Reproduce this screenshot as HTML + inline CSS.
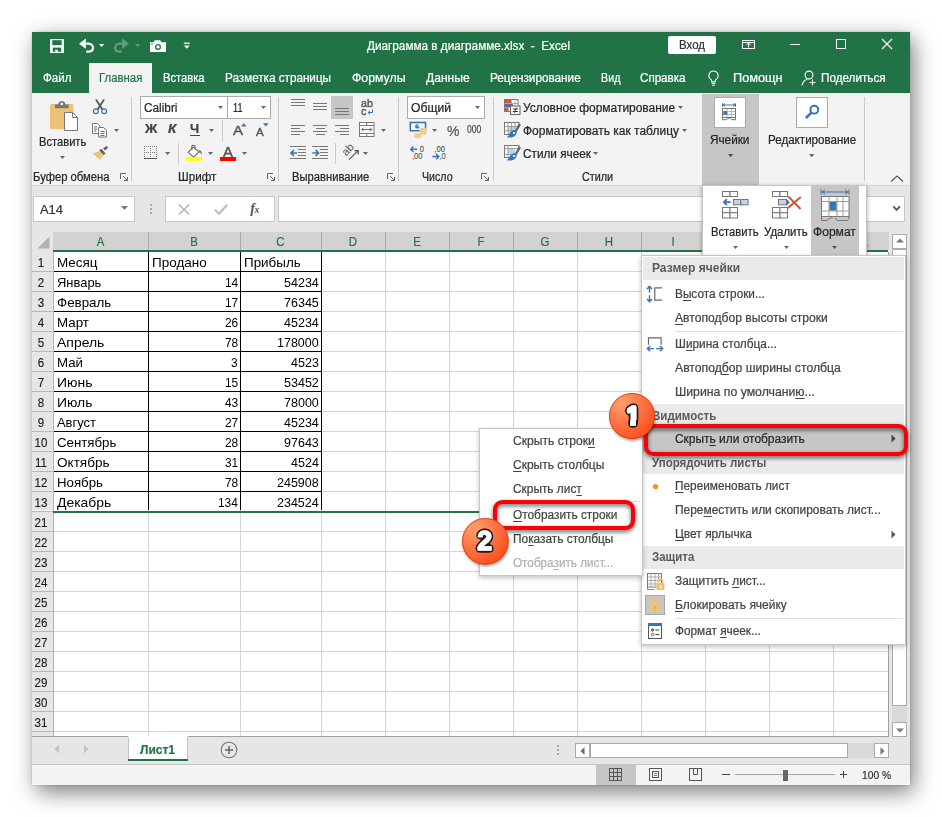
<!DOCTYPE html>
<html lang="ru"><head><meta charset="utf-8"><title>Excel</title><style>
html,body{margin:0;padding:0;background:#fff;}
body{width:942px;height:817px;position:relative;overflow:hidden;font-family:'Liberation Sans', sans-serif;}
.a{position:absolute;display:block;}
.t{white-space:pre;transform-origin:0 50%;-webkit-text-stroke:0.22px;}
u{text-decoration-thickness:1px;text-underline-offset:1.5px;}
</style></head>
<body>
<div class="a" style="left:32px;top:32px;width:878px;height:753px;background:#f3f3f3;box-shadow:3.500px 7px 21px rgba(0,0,0,.52), 0 0 2px rgba(0,0,0,.18);"></div>
<div class="a" style="left:32px;top:32px;width:878px;height:61px;background:#217346;"></div>
<div class="a" style="left:89px;top:63px;width:63px;height:30px;background:#f3f3f3;"></div>
<svg class="a" style="left:50px;top:39px;" width="14" height="14" viewBox="0 0 14 14"><path d="M0 0.800Q0 0 .8 0H13.200Q14 0 14 .8V13.200Q14 14 13.200 14H.8Q0 14 0 13.200z" fill="#fff"/><rect x="2.300" y="1.200" width="9.400" height="5" fill="#217346"/><rect x="2.800" y="8.600" width="8.400" height="4.200" fill="#217346"/><rect x="5.200" y="10.800" width="2.600" height="2" fill="#fff"/></svg>
<svg class="a" style="left:78px;top:38px;" width="17" height="15" viewBox="0 0 17 15"><path d="M1 5.700L7.800 0.600V10.800z" fill="#fff"/><path d="M7 5.700H10.300C13.400 5.700 15 7.800 15 9.800C15 12 13.200 13.700 10.200 13.700H8.300" fill="none" stroke="#fff" stroke-width="2.200"/></svg>
<svg class="a" style="left:98.1px;top:43.1px" width="7.2" height="5.016"><path d="M1 1h5.2l-2.6 3.016z" fill="#fff"/></svg>
<svg class="a" style="left:113px;top:38px;" width="17" height="15" viewBox="0 0 17 15"><g opacity=".3" transform="translate(17,0) scale(-1,1)"><path d="M1 5.700L7.800 0.600V10.800z" fill="#fff"/><path d="M7 5.700H10.300C13.400 5.700 15 7.800 15 9.800C15 12 13.200 13.700 10.200 13.700H8.300" fill="none" stroke="#fff" stroke-width="2.200"/></g></svg>
<svg class="a" style="left:133.9px;top:43.1px" width="7.2" height="5.016"><path d="M1 1h5.2l-2.6 3.016z" fill="rgba(255,255,255,.3)"/></svg>
<svg class="a" style="left:149px;top:39px;" width="18" height="14" viewBox="0 0 18 14"><path d="M1 3.2h3.6l1.2-2h5.4l1.2 2H17v9.8H1z" fill="#fff"/><circle cx="9" cy="7.9" r="3" fill="#217346"/><circle cx="9" cy="7.900" r="1.700" fill="#fff"/><rect x="2.300" y="4.300" width="1.300" height="1.300" fill="#217346"/></svg>
<svg class="a" style="left:183px;top:42px;" width="8" height="8" viewBox="0 0 8 8"><rect x="0.8" y="0.6" width="6" height="1.2" fill="#fff"/><path d="M0.8 3.6h6l-3 3.2z" fill="#fff"/></svg>
<span class="a t" id="T0" style="left:367px;transform:scaleX(0.9788);top:39.64px;font-size:12px;line-height:12px;color:#fff;">Диаграмма в диаграмме.xlsx  -  Excel</span>
<div class="a" style="left:668px;top:35.5px;width:48px;height:18.5px;background:#fff;border-radius:2px;"></div>
<span class="a t" id="T1" style="left:679px;transform:scaleX(0.9574);top:39.34px;font-size:12px;line-height:12px;color:#333;">Вход</span>
<svg class="a" style="left:742px;top:40px;" width="13" height="9" viewBox="0 0 13 9"><rect x="0.5" y="0.5" width="12" height="8" fill="none" stroke="#fff"/><path d="M0.5 2.5h12" stroke="#fff"/><path d="M6.5 7.5v-4M4.5 5l2-2 2 2" fill="none" stroke="#fff"/></svg>
<div class="a" style="left:790px;top:44px;width:10px;height:1px;background:#fff;"></div>
<div class="a" style="left:836px;top:39px;width:10px;height:10px;border:1px solid #fff;box-sizing:border-box;"></div>
<svg class="a" style="left:881px;top:38px;" width="12" height="12" viewBox="0 0 12 12"><path d="M1 1l10 10M11 1L1 11" stroke="#fff" stroke-width="1.1" fill="none"/></svg>
<span class="a t" id="T2" style="left:43px;transform:scaleX(0.9690);top:72.04px;font-size:12px;line-height:12px;color:#fff;">Файл</span>
<span class="a t" id="T3" style="left:98.5px;transform:scaleX(0.9477);top:72.04px;font-size:12px;line-height:12px;color:#217346;">Главная</span>
<span class="a t" id="T4" style="left:163px;transform:scaleX(0.9325);top:72.04px;font-size:12px;line-height:12px;color:#fff;">Вставка</span>
<span class="a t" id="T5" style="left:225px;transform:scaleX(0.9736);top:72.04px;font-size:12px;line-height:12px;color:#fff;">Разметка страницы</span>
<span class="a t" id="T6" style="left:352.4px;transform:scaleX(1.0245);top:72.04px;font-size:12px;line-height:12px;color:#fff;">Формулы</span>
<span class="a t" id="T7" style="left:425.8px;transform:scaleX(1.0079);top:72.04px;font-size:12px;line-height:12px;color:#fff;">Данные</span>
<span class="a t" id="T8" style="left:489.7px;transform:scaleX(0.9787);top:72.04px;font-size:12px;line-height:12px;color:#fff;">Рецензирование</span>
<span class="a t" id="T9" style="left:600.6px;transform:scaleX(0.8932);top:72.04px;font-size:12px;line-height:12px;color:#fff;">Вид</span>
<span class="a t" id="T10" style="left:640.4px;transform:scaleX(0.9665);top:72.04px;font-size:12px;line-height:12px;color:#fff;">Справка</span>
<svg class="a" style="left:707px;top:70px;" width="13" height="17" viewBox="0 0 13 17"><path d="M6.5 1a4.6 4.6 0 0 0-2.6 8.4c.5.4.8 1 .8 1.7v.6h3.6v-.6c0-.7.3-1.3.8-1.7A4.6 4.6 0 0 0 6.5 1z" fill="none" stroke="#fff" stroke-width="1.1"/><path d="M4.7 13.4h3.6M5.2 15.2h2.6" stroke="#fff" stroke-width="1.1"/></svg>
<span class="a t" id="T11" style="left:733px;transform:scaleX(1.0592);top:72.04px;font-size:12px;line-height:12px;color:#fff;">Помощн</span>
<svg class="a" style="left:801px;top:70px;" width="17" height="17" viewBox="0 0 17 17"><circle cx="8" cy="5" r="3.9" fill="none" stroke="#fff" stroke-width="1.1"/><path d="M1 15.5c0.6-3.6 2.6-5.6 5.2-6.3" fill="none" stroke="#fff" stroke-width="1.1"/><path d="M11.5 9.5v6M8.5 12.5h6" stroke="#fff" stroke-width="1.1"/></svg>
<span class="a t" id="T12" style="left:821px;transform:scaleX(0.9749);top:72.04px;font-size:12px;line-height:12px;color:#fff;">Поделиться</span>
<div class="a" style="left:32px;top:185px;width:878px;height:1px;background:#d6d6d6;"></div>
<svg class="a" style="left:49px;top:100px;" width="30" height="32" viewBox="0 0 30 32">
<rect x="1" y="4" width="23.5" height="25" rx="1.5" fill="#eec274"/>
<path d="M6 8.300V4.600h3.300C9.300 2.300 10.600 1 12.800 1s3.500 1.300 3.500 3.600H19.600V8.300z" fill="#777"/>
<circle cx="12.800" cy="3.900" r="1.300" fill="#f3f3f3"/>
<path d="M15.5 12.5h8l5 5v13h-13z" fill="#fff" stroke="#777" stroke-width="1"/>
<path d="M23.5 12.5v5h5" fill="none" stroke="#777" stroke-width="1"/></svg>
<span class="a t" id="T13" style="left:38.5px;transform:scaleX(0.9297);top:135.64px;font-size:12px;line-height:12px;color:#262626;">Вставить</span>
<svg class="a" style="left:59.0px;top:155.1px" width="7" height="4.9"><path d="M1 1h5l-2.5 2.9z" fill="#666"/></svg>
<svg class="a" style="left:92px;top:99px;" width="16" height="16" viewBox="0 0 16 16">
<path d="M4 0.500l6.400 10M12 0.500L5.600 10.500" stroke="#5e5e5e" stroke-width="1.900" fill="none"/>
<circle cx="3.9" cy="12.2" r="2.4" fill="none" stroke="#3a73b5" stroke-width="1.2"/>
<circle cx="12.1" cy="12.2" r="2.4" fill="none" stroke="#3a73b5" stroke-width="1.2"/></svg>
<svg class="a" style="left:92px;top:123px;" width="16" height="15" viewBox="0 0 16 15">
<path d="M0.5 0.5h5l2.5 2.5v7.5h-7.5z" fill="#fff" stroke="#777"/>
<path d="M2 4h3M2 6h3M2 8h2" stroke="#3a73b5" stroke-width="1"/>
<path d="M6.5 4.5h5l3 3v6.5h-8z" fill="#fff" stroke="#777"/>
<path d="M8.5 8.5h4M8.5 10.5h4M8.5 12.5h4" stroke="#3a73b5" stroke-width="1"/></svg>
<svg class="a" style="left:113.0px;top:128.1px" width="7" height="4.9"><path d="M1 1h5l-2.5 2.9z" fill="#666"/></svg>
<svg class="a" style="left:92px;top:145px;" width="17" height="16" viewBox="0 0 17 16">
<path d="M11.2 3.6l3.2-2.8 1.8 2-3.2 2.8z" fill="#666"/>
<path d="M7.2 5.6l2.2-1.9 4.2 4.7-2.2 1.9z" fill="#666"/>
<path d="M6.6 6.6L0.5 8.4 8.2 15l3-6z" fill="#eec274"/></svg>
<span class="a t" id="T14" style="left:33px;transform:scaleX(0.9381);top:170.74px;font-size:12px;line-height:12px;color:#262626;">Буфер обмена</span>
<svg class="a" style="left:120px;top:173px;" width="8" height="8" viewBox="0 0 8 8"><path d="M0.5 6V0.5H6M3 3l4.5 4.5M7.5 4v3.5H4" fill="none" stroke="#666" stroke-width="1"/></svg>
<div class="a" style="left:131px;top:97px;width:1px;height:84px;background:#c8c8c8;"></div>
<div class="a" style="left:140px;top:96px;width:88px;height:23px;background:#fff;border:1px solid #ababab;box-sizing:border-box;"></div>
<div class="a" style="left:227px;top:96px;width:44px;height:23px;background:#fff;border:1px solid #ababab;box-sizing:border-box;"></div>
<span class="a t" id="T15" style="left:143.5px;transform:scaleX(0.9848);top:101.54px;font-size:12px;line-height:12px;color:#262626;">Calibri</span>
<svg class="a" style="left:216.9px;top:105.0px" width="7" height="4.9"><path d="M1 1h5l-2.5 2.9z" fill="#666"/></svg>
<span class="a t" id="T16" style="left:232.5px;transform:scaleX(0.7619);top:101.54px;font-size:12px;line-height:12px;color:#262626;">11</span>
<svg class="a" style="left:259.9px;top:105.0px" width="7" height="4.9"><path d="M1 1h5l-2.5 2.9z" fill="#666"/></svg>
<span class="a t" id="T17" style="left:144.7px;transform:scaleX(1.0873);top:123.22px;font-size:12.5px;line-height:12.5px;color:#444;font-weight:700;">Ж</span>
<span class="a t" id="T18" style="left:167.8px;transform:scaleX(1.0927);top:123.22px;font-size:12.5px;line-height:12.5px;color:#444;font-weight:700;font-style:italic;">К</span>
<span class="a t" id="T19" style="left:190.4px;transform:scaleX(1.0458);top:123.22px;font-size:12.5px;line-height:12.5px;color:#444;font-weight:700;">Ч</span>
<div class="a" style="left:190.2px;top:135.2px;width:9.8px;height:1px;background:#444;"></div>
<svg class="a" style="left:208.0px;top:128.1px" width="7" height="4.9"><path d="M1 1h5l-2.5 2.9z" fill="#666"/></svg>
<div class="a" style="left:222px;top:120px;width:1px;height:21px;background:#c8c8c8;"></div>
<span class="a t" id="T20" style="left:233px;transform:scaleX(1.1092);top:124.27px;font-size:13.5px;line-height:13.5px;color:#555;-webkit-text-stroke:.45px;">A</span>
<svg class="a" style="left:240.5px;top:122.5px;" width="6" height="4" viewBox="0 0 6 4"><path d="M0 3.6L2.8 0.3 5.6 3.6z" fill="#3a73b5"/></svg>
<span class="a t" id="T21" style="left:256px;transform:scaleX(1.0976);top:126.81px;font-size:10.5px;line-height:10.5px;color:#555;-webkit-text-stroke:.4px;">A</span>
<svg class="a" style="left:262.5px;top:122.5px;" width="6" height="4" viewBox="0 0 6 4"><path d="M0 0.3h5.6L2.8 3.6z" fill="#3a73b5"/></svg>
<svg class="a" style="left:143px;top:145px;" width="15" height="15" viewBox="0 0 15 15">
<g stroke="#7a7a7a" stroke-width="1" stroke-dasharray="1 1" fill="none" shape-rendering="crispEdges">
<path d="M1 1.500h13M1 7.500h13M1.500 1v12M7.500 1v12M13.500 1v12"/></g>
<path d="M1 13.500h13" stroke="#555" stroke-width="1.200" shape-rendering="crispEdges"/></svg>
<svg class="a" style="left:163.9px;top:150.8px" width="7.2" height="5.016"><path d="M1 1h5.2l-2.6 3.016z" fill="#666"/></svg>
<div class="a" style="left:178px;top:143px;width:1px;height:21px;background:#c8c8c8;"></div>
<svg class="a" style="left:186px;top:144px;" width="17" height="17" viewBox="0 0 17 17">
<path d="M7.300 3.200L2.300 8.300l5.300 4.900 5.400-5.300z" fill="#fff" stroke="#666" stroke-width="1.100"/>
<path d="M5.800 6V2.600c0-1.900 3.200-1.900 3.200 0v2.200" fill="none" stroke="#666" stroke-width="1.100"/>
<path d="M12.600 5.800c2.200.4 3.600 2.200 3.300 5.200-.7-1.700-1.600-2.500-3.100-2.700l1-1z" fill="#3a73b5"/>
<rect x="0" y="13" width="16.200" height="3.800" fill="#ffff00"/></svg>
<svg class="a" style="left:206.8px;top:150.9px" width="7" height="4.9"><path d="M1 1h5l-2.5 2.9z" fill="#666"/></svg>
<span class="a t" id="T22" style="left:223.4px;transform:scaleX(1.0595);top:144.95px;font-size:14px;line-height:14px;color:#555;-webkit-text-stroke:.45px;">A</span>
<div class="a" style="left:220px;top:157px;width:16.2px;height:3.8px;background:#ff0000;"></div>
<svg class="a" style="left:241.0px;top:150.9px" width="7" height="4.9"><path d="M1 1h5l-2.5 2.9z" fill="#666"/></svg>
<span class="a t" id="T23" style="left:177.6px;transform:scaleX(0.9700);top:170.74px;font-size:12px;line-height:12px;color:#262626;">Шрифт</span>
<svg class="a" style="left:267px;top:173px;" width="8" height="8" viewBox="0 0 8 8"><path d="M0.5 6V0.5H6M3 3l4.5 4.5M7.5 4v3.5H4" fill="none" stroke="#666" stroke-width="1"/></svg>
<div class="a" style="left:278px;top:97px;width:1px;height:84px;background:#c8c8c8;"></div>
<div class="a" style="left:291px;top:99px;width:14px;height:1px;background:#777;"></div>
<div class="a" style="left:291px;top:102px;width:14px;height:1px;background:#777;"></div>
<div class="a" style="left:291px;top:105px;width:14px;height:1px;background:#777;"></div>
<div class="a" style="left:313px;top:103px;width:14px;height:1px;background:#777;"></div>
<div class="a" style="left:313px;top:106px;width:14px;height:1px;background:#777;"></div>
<div class="a" style="left:313px;top:109px;width:14px;height:1px;background:#777;"></div>
<div class="a" style="left:331px;top:96px;width:22px;height:23px;background:#c6c6c6;"></div>
<div class="a" style="left:335px;top:108px;width:14px;height:1px;background:#777;"></div>
<div class="a" style="left:335px;top:111px;width:14px;height:1px;background:#777;"></div>
<div class="a" style="left:335px;top:114px;width:14px;height:1px;background:#777;"></div>
<span class="a t" id="T24" style="left:360.8px;transform:scaleX(1.0096);top:98.41px;font-size:10.5px;line-height:10.5px;color:#555;-webkit-text-stroke:.4px;">ab</span>
<span class="a t" id="T25" style="left:361px;top:105.71px;font-size:10.5px;line-height:10.5px;color:#555;-webkit-text-stroke:.4px;">c</span>
<svg class="a" style="left:366.5px;top:108.5px;" width="7" height="6" viewBox="0 0 7 6"><path d="M5.5 0.5v3H1.2M3 1.6L1 3.5l2 1.9" fill="none" stroke="#3a73b5" stroke-width="1"/></svg>
<div class="a" style="left:291px;top:125px;width:14px;height:1px;background:#777;"></div>
<div class="a" style="left:291px;top:128px;width:9px;height:1px;background:#777;"></div>
<div class="a" style="left:291px;top:131px;width:14px;height:1px;background:#777;"></div>
<div class="a" style="left:291px;top:134px;width:9px;height:1px;background:#777;"></div>
<div class="a" style="left:313px;top:125px;width:14px;height:1px;background:#777;"></div>
<div class="a" style="left:315.5px;top:128px;width:9.0px;height:1px;background:#777;"></div>
<div class="a" style="left:313px;top:131px;width:14px;height:1px;background:#777;"></div>
<div class="a" style="left:315.5px;top:134px;width:9.0px;height:1px;background:#777;"></div>
<div class="a" style="left:335px;top:125px;width:14px;height:1px;background:#777;"></div>
<div class="a" style="left:340px;top:128px;width:9px;height:1px;background:#777;"></div>
<div class="a" style="left:335px;top:131px;width:14px;height:1px;background:#777;"></div>
<div class="a" style="left:340px;top:134px;width:9px;height:1px;background:#777;"></div>
<svg class="a" style="left:359px;top:122px;" width="16" height="15" viewBox="0 0 16 15">
<rect x="0.5" y="0.5" width="14.5" height="14" fill="#fff" stroke="#777"/>
<path d="M0.5 3.5h14.5M0.5 11.5h14.5M7.7 0.5v3M7.7 11.5v3" stroke="#777"/>
<path d="M2.8 7.5h10M4.6 5.7L2.8 7.5l1.8 1.8M11 5.7l1.8 1.8L11 9.3" fill="none" stroke="#3a73b5" stroke-width="1"/></svg>
<svg class="a" style="left:380.0px;top:128.1px" width="7" height="4.9"><path d="M1 1h5l-2.5 2.9z" fill="#666"/></svg>
<div class="a" style="left:290px;top:146px;width:16px;height:1px;background:#777;"></div>
<div class="a" style="left:298px;top:149px;width:8px;height:1px;background:#777;"></div>
<div class="a" style="left:298px;top:152px;width:8px;height:1px;background:#777;"></div>
<div class="a" style="left:298px;top:155px;width:8px;height:1px;background:#777;"></div>
<div class="a" style="left:290px;top:158px;width:16px;height:1px;background:#777;"></div>
<svg class="a" style="left:290px;top:148.5px;" width="8" height="8" viewBox="0 0 8 8"><path d="M7 4H1M4 1L1 4l3 3" fill="none" stroke="#3a73b5" stroke-width="1.7"/></svg>
<div class="a" style="left:312px;top:146px;width:16px;height:1px;background:#777;"></div>
<div class="a" style="left:320px;top:149px;width:8px;height:1px;background:#777;"></div>
<div class="a" style="left:320px;top:152px;width:8px;height:1px;background:#777;"></div>
<div class="a" style="left:320px;top:155px;width:8px;height:1px;background:#777;"></div>
<div class="a" style="left:312px;top:158px;width:16px;height:1px;background:#777;"></div>
<svg class="a" style="left:312px;top:148.5px;" width="8" height="8" viewBox="0 0 8 8"><path d="M0.3 4h6M3.6 1l3 3-3 3" fill="none" stroke="#3a73b5" stroke-width="1.7"/></svg>
<div class="a" style="left:335px;top:143px;width:1px;height:21px;background:#c8c8c8;"></div>
<svg class="a" style="left:340px;top:142px;" width="22" height="22" viewBox="0 0 22 22">
<text x="0" y="0" font-family="Liberation Sans, sans-serif" font-size="11" fill="#555" transform="translate(6.300,14.600) rotate(-48)">ab</text>
<path d="M9 17.600L18 8.900M14.400 8.600h3.800v3.800" fill="none" stroke="#555" stroke-width="1.200"/></svg>
<svg class="a" style="left:362.0px;top:150.9px" width="7" height="4.9"><path d="M1 1h5l-2.5 2.9z" fill="#666"/></svg>
<span class="a t" id="T26" style="left:291.7px;transform:scaleX(0.9357);top:170.74px;font-size:12px;line-height:12px;color:#262626;">Выравнивание</span>
<svg class="a" style="left:387px;top:173px;" width="8" height="8" viewBox="0 0 8 8"><path d="M0.5 6V0.5H6M3 3l4.5 4.5M7.5 4v3.5H4" fill="none" stroke="#666" stroke-width="1"/></svg>
<div class="a" style="left:398px;top:97px;width:1px;height:84px;background:#c8c8c8;"></div>
<div class="a" style="left:407px;top:96px;width:78px;height:23px;background:#fff;border:1px solid #ababab;box-sizing:border-box;"></div>
<span class="a t" id="T27" style="left:410.8px;transform:scaleX(1.0177);top:101.54px;font-size:12px;line-height:12px;color:#262626;">Общий</span>
<svg class="a" style="left:474.4px;top:105.0px" width="7" height="4.9"><path d="M1 1h5l-2.5 2.9z" fill="#666"/></svg>
<svg class="a" style="left:409px;top:121px;" width="18" height="18" viewBox="0 0 18 18">
<rect x="1.300" y="1.500" width="15.200" height="8.200" fill="#fff" stroke="#3a73b5" stroke-width="1.600"/>
<circle cx="8.300" cy="5.400" r="2.200" fill="#3a73b5"/><circle cx="9" cy="4.900" r=".8" fill="#fff"/>
<g fill="#eec274" stroke="#f6dfae" stroke-width=".7">
<ellipse cx="13.900" cy="12.300" rx="3.500" ry="1.500"/><ellipse cx="13.900" cy="10.300" rx="3.500" ry="1.500"/><ellipse cx="13.900" cy="8.300" rx="3.500" ry="1.500"/>
<ellipse cx="8.600" cy="15.600" rx="3.500" ry="1.500"/><ellipse cx="8.600" cy="13.700" rx="3.500" ry="1.500"/></g></svg>
<svg class="a" style="left:431.2px;top:128.0px" width="7.2" height="5.016"><path d="M1 1h5.2l-2.6 3.016z" fill="#666"/></svg>
<span class="a t" id="T28" style="left:446.5px;transform:scaleX(0.9368);top:123.40px;font-size:15px;line-height:15px;color:#555;">%</span>
<span class="a t" id="T29" style="left:466.7px;transform:scaleX(0.8157);top:124.01px;font-size:10.5px;line-height:10.5px;color:#444;">000</span>
<svg class="a" style="left:410px;top:145px;" width="16" height="15" viewBox="0 0 16 15">
<path d="M7 4.300H0.800M3.400 1.600L0.600 4.300 3.400 7" fill="none" stroke="#3a73b5" stroke-width="1.400"/>
<text transform="translate(9.800,6.700) scale(.82,1)" font-family="Liberation Sans, sans-serif" font-size="9.300" fill="#3a3a3a">0</text>
<text transform="translate(2,14) scale(.82,1)" font-family="Liberation Sans, sans-serif" font-size="9.300" fill="#3a3a3a">,00</text></svg>
<svg class="a" style="left:432px;top:145px;" width="16" height="15" viewBox="0 0 16 15">
<text transform="translate(2.300,6.700) scale(.82,1)" font-family="Liberation Sans, sans-serif" font-size="9.300" fill="#3a3a3a">,00</text>
<path d="M0.300 11.500H6.600M4 8.800L6.800 11.500 4 14.200" fill="none" stroke="#3a73b5" stroke-width="1.400"/>
<text transform="translate(7.300,14) scale(.82,1)" font-family="Liberation Sans, sans-serif" font-size="9.300" fill="#3a3a3a">,0</text></svg>
<span class="a t" id="T30" style="left:421.7px;transform:scaleX(0.8866);top:170.74px;font-size:12px;line-height:12px;color:#262626;">Число</span>
<svg class="a" style="left:481px;top:173px;" width="8" height="8" viewBox="0 0 8 8"><path d="M0.5 6V0.5H6M3 3l4.5 4.5M7.5 4v3.5H4" fill="none" stroke="#666" stroke-width="1"/></svg>
<div class="a" style="left:492.5px;top:97px;width:1px;height:84px;background:#c8c8c8;"></div>
<svg class="a" style="left:503px;top:98px;" width="18" height="18" viewBox="0 0 18 18">
<rect x="1.500" y="1.500" width="13.500" height="12" fill="#fff" stroke="#777"/>
<path d="M8.500 1.500v12M1.500 5.500h13.500M1.500 9.500h13.500M12 1.500v8" stroke="#999" stroke-width=".8"/>
<rect x="2" y="2" width="6" height="3" fill="#e0532f"/><rect x="2" y="6" width="8" height="3" fill="#3a73b5"/><rect x="2" y="10" width="3.500" height="3" fill="#e0532f"/>
<rect x="7.500" y="8" width="9.500" height="8.500" fill="#fff" stroke="#6a6a6a" stroke-width="1.100"/>
<path d="M9.800 11h5M9.800 13.500h5M13.600 9.600l-2.500 5.300" stroke="#333" stroke-width="1"/></svg>
<svg class="a" style="left:503px;top:121px;" width="18" height="18" viewBox="0 0 18 18">
<rect x="1.500" y="1.500" width="14.500" height="12" fill="#fff" stroke="#777"/>
<rect x="5" y="5.500" width="7" height="7.500" fill="#bcd4ee"/><path d="M5 1.500v12M8.500 1.500v12M12 1.500v12M1.500 5.500h14.500M1.500 9.500h14.500" stroke="#999" stroke-width=".9"/>
<path d="M9.500 14.500L16.300 3.500l1.200 0v11z" fill="#f3f3f3"/>
<path d="M11.800 9.600L15.800 2.200l2.200 1.600-4.300 7.200z" fill="#6a6a6a"/>
<path d="M12 9.400c-2.400-.3-4.400 1.200-5.400 3.400-.6 1.300-1.400 2.500-2.600 3.400 3.400.7 6.400.2 8.300-1.800 1.200-1.300 1.600-2.900 1.300-4z" fill="#3a73b5"/>
<ellipse cx="11" cy="12" rx="1.300" ry=".9" fill="#fff" transform="rotate(-35 11 12)"/></svg>
<svg class="a" style="left:503px;top:144px;" width="18" height="18" viewBox="0 0 18 18">
<rect x="1.500" y="1.500" width="14.500" height="12" fill="#fff" stroke="#777"/>
<rect x="5" y="4.500" width="7" height="6" fill="#bcd4ee"/><path d="M5 1.500v12M1.500 4.500h14.500M1.500 10.500h11" stroke="#999" stroke-width=".9"/>
<path d="M9.500 14.500L16.300 3.500l1.200 0v11z" fill="#f3f3f3"/>
<path d="M11.800 9.600L15.800 2.200l2.200 1.600-4.300 7.200z" fill="#6a6a6a"/>
<path d="M12 9.400c-2.400-.3-4.400 1.200-5.400 3.400-.6 1.300-1.400 2.500-2.600 3.400 3.400.7 6.400.2 8.300-1.800 1.200-1.300 1.600-2.900 1.300-4z" fill="#3a73b5"/>
<ellipse cx="11" cy="12" rx="1.300" ry=".9" fill="#fff" transform="rotate(-35 11 12)"/></svg>
<span class="a t" id="T31" style="left:523px;transform:scaleX(0.9969);top:101.64px;font-size:12px;line-height:12px;color:#262626;">Условное форматирование</span>
<svg class="a" style="left:677.3px;top:105.0px" width="7" height="4.9"><path d="M1 1h5l-2.5 2.9z" fill="#666"/></svg>
<span class="a t" id="T32" style="left:523px;transform:scaleX(0.9991);top:124.64px;font-size:12px;line-height:12px;color:#262626;">Форматировать как таблицу</span>
<svg class="a" style="left:680.8px;top:128.1px" width="7" height="4.9"><path d="M1 1h5l-2.5 2.9z" fill="#666"/></svg>
<span class="a t" id="T33" style="left:523px;transform:scaleX(0.9817);top:147.54px;font-size:12px;line-height:12px;color:#262626;">Стили ячеек</span>
<svg class="a" style="left:592.3px;top:150.9px" width="7" height="4.9"><path d="M1 1h5l-2.5 2.9z" fill="#666"/></svg>
<span class="a t" id="T34" style="left:581.7px;transform:scaleX(0.8994);top:170.74px;font-size:12px;line-height:12px;color:#262626;">Стили</span>
<div class="a" style="left:702px;top:94px;width:57px;height:91px;background:#c6c6c6;"></div>
<div class="a" style="left:714px;top:97px;width:32px;height:31px;background:#fff;border:1px solid #ababab;box-sizing:border-box;"></div>
<svg class="a" style="left:721px;top:103px;" width="17" height="18" viewBox="0 0 17 18">
<path d="M1.500 0.300v3.400M14.500 0.300v3.400M2 2h12M4 0.500L2 2l2 1.500M12 0.500L14 2l-2 1.500" fill="none" stroke="#3a73b5" stroke-width="1"/>
<rect x="1.500" y="5.500" width="13" height="9" fill="#fff" stroke="#777"/>
<path d="M2 8.500h12M2 11.500h12M6 6v8M10.500 6v8" stroke="#b9b9b9" stroke-width="1"/>
<rect x="2.300" y="8.200" width="4" height="3.500" fill="#3a73b5"/>
<path d="M1.500 14.500v2.200h4.300l1-1.300h1.700M9.300 15.400l1 1.300h4.200v-2.200" fill="none" stroke="#777" stroke-width="1"/></svg>
<span class="a t" id="T35" style="left:710px;transform:scaleX(0.9789);top:134.04px;font-size:12px;line-height:12px;color:#262626;">Ячейки</span>
<svg class="a" style="left:726.7px;top:152.8px" width="7.4" height="5.132"><path d="M1 1h5.4l-2.7 3.132z" fill="#555"/></svg>
<div class="a" style="left:796px;top:97px;width:32px;height:31px;background:#fff;border:1px solid #ababab;box-sizing:border-box;"></div>
<svg class="a" style="left:804px;top:104px;" width="16" height="16" viewBox="0 0 16 16"><circle cx="10.300" cy="5.700" r="3.900" fill="none" stroke="#3a73b5" stroke-width="2"/><path d="M7.500 8.600L1.800 14" stroke="#3a73b5" stroke-width="2.500"/></svg>
<span class="a t" id="T36" style="left:767.6px;transform:scaleX(0.9659);top:134.04px;font-size:12px;line-height:12px;color:#262626;">Редактирование</span>
<svg class="a" style="left:807.7px;top:152.8px" width="7.4" height="5.132"><path d="M1 1h5.4l-2.7 3.132z" fill="#666"/></svg>
<div class="a" style="left:864px;top:97px;width:1px;height:84px;background:#c8c8c8;"></div>
<svg class="a" style="left:890px;top:175px;" width="14" height="8" viewBox="0 0 14 8"><path d="M1 6.500l6-5.500 6 5.500" fill="none" stroke="#555" stroke-width="1.100"/></svg>
<div class="a" style="left:32px;top:186px;width:878px;height:46px;background:#e6e6e6;"></div>
<div class="a" style="left:33px;top:196px;width:102px;height:26px;background:#fff;border:1px solid #c8c8c8;box-sizing:border-box;"></div>
<span class="a t" id="T37" style="left:40px;transform:scaleX(1.0768);top:203.64px;font-size:12px;line-height:12px;color:#333;">A14</span>
<svg class="a" style="left:120.0px;top:205.0px" width="9" height="6.06"><path d="M1 1h7l-3.5 4.06z" fill="#777"/></svg>
<div class="a" style="left:149.5px;top:203.8px;width:2px;height:2px;background:#a8a8a8;"></div>
<div class="a" style="left:149.5px;top:207.8px;width:2px;height:2px;background:#a8a8a8;"></div>
<div class="a" style="left:149.5px;top:211.8px;width:2px;height:2px;background:#a8a8a8;"></div>
<div class="a" style="left:165px;top:196px;width:110px;height:26px;background:#fff;border:1px solid #c8c8c8;box-sizing:border-box;"></div>
<svg class="a" style="left:178px;top:203.5px;" width="12" height="11" viewBox="0 0 12 11"><path d="M0.800 0.500l10.400 10M11.200 0.500L0.800 10.500" stroke="#b4b4b4" stroke-width="1.500" fill="none"/></svg>
<svg class="a" style="left:214px;top:203.5px;" width="14" height="11" viewBox="0 0 14 11"><path d="M0.800 5.800l4.200 4L13.200 0.800" stroke="#bcbcbc" stroke-width="2.100" fill="none"/></svg>
<span class="a" style="left:250.300px;top:201px;font:italic 700 14px 'Liberation Serif',serif;color:#555;line-height:15px;letter-spacing:-0.500px"><i>f</i><span style="font-size:9.500px">x</span></span>
<div class="a" style="left:278px;top:196px;width:627px;height:26px;background:#fff;border:1px solid #c8c8c8;box-sizing:border-box;"></div>
<svg class="a" style="left:892px;top:205px;" width="10" height="8" viewBox="0 0 10 8"><path d="M1.300 1.300l3.300 3.500 3.300-3.500" fill="none" stroke="#555" stroke-width="1.900"/></svg>
<div class="a" style="left:32px;top:232px;width:857px;height:505px;background:#fff;"></div>
<div class="a" style="left:53px;top:232px;width:836px;height:18px;background:#d2d2d2;"></div>
<div class="a" style="left:53px;top:250px;width:835px;height:2px;background:#217346;"></div>
<div class="a" style="left:32px;top:232px;width:21px;height:20px;background:#e6e6e6;"></div>
<svg class="a" style="left:37.4px;top:235.5px;" width="13" height="13" viewBox="0 0 13 13"><path d="M12.500 0.500v12H0.500z" fill="#b2b2b2"/></svg>
<span class="a" style="left:53px;top:233.500px;width:95px;text-align:center;font-size:13px;line-height:16px;color:#217346;transform:scaleX(.88);-webkit-text-stroke:.2px">A</span>
<div class="a" style="left:148px;top:232px;width:1px;height:18px;background:#ababab;"></div>
<span class="a" style="left:148px;top:233.500px;width:92px;text-align:center;font-size:13px;line-height:16px;color:#217346;transform:scaleX(.88);-webkit-text-stroke:.2px">B</span>
<div class="a" style="left:240px;top:232px;width:1px;height:18px;background:#ababab;"></div>
<span class="a" style="left:240px;top:233.500px;width:81px;text-align:center;font-size:13px;line-height:16px;color:#217346;transform:scaleX(.88);-webkit-text-stroke:.2px">C</span>
<div class="a" style="left:321px;top:232px;width:1px;height:18px;background:#ababab;"></div>
<span class="a" style="left:321px;top:233.500px;width:64px;text-align:center;font-size:13px;line-height:16px;color:#217346;transform:scaleX(.88);-webkit-text-stroke:.2px">D</span>
<div class="a" style="left:385px;top:232px;width:1px;height:18px;background:#ababab;"></div>
<span class="a" style="left:385px;top:233.500px;width:64px;text-align:center;font-size:13px;line-height:16px;color:#217346;transform:scaleX(.88);-webkit-text-stroke:.2px">E</span>
<div class="a" style="left:449px;top:232px;width:1px;height:18px;background:#ababab;"></div>
<span class="a" style="left:449px;top:233.500px;width:64px;text-align:center;font-size:13px;line-height:16px;color:#217346;transform:scaleX(.88);-webkit-text-stroke:.2px">F</span>
<div class="a" style="left:513px;top:232px;width:1px;height:18px;background:#ababab;"></div>
<span class="a" style="left:513px;top:233.500px;width:64px;text-align:center;font-size:13px;line-height:16px;color:#217346;transform:scaleX(.88);-webkit-text-stroke:.2px">G</span>
<div class="a" style="left:577px;top:232px;width:1px;height:18px;background:#ababab;"></div>
<span class="a" style="left:577px;top:233.500px;width:64px;text-align:center;font-size:13px;line-height:16px;color:#217346;transform:scaleX(.88);-webkit-text-stroke:.2px">H</span>
<div class="a" style="left:641px;top:232px;width:1px;height:18px;background:#ababab;"></div>
<span class="a" style="left:641px;top:233.500px;width:64px;text-align:center;font-size:13px;line-height:16px;color:#217346;transform:scaleX(.88);-webkit-text-stroke:.2px">I</span>
<div class="a" style="left:705px;top:232px;width:1px;height:18px;background:#ababab;"></div>
<span class="a" style="left:705px;top:233.500px;width:64px;text-align:center;font-size:13px;line-height:16px;color:#217346;transform:scaleX(.88);-webkit-text-stroke:.2px">J</span>
<div class="a" style="left:769px;top:232px;width:1px;height:18px;background:#ababab;"></div>
<span class="a" style="left:769px;top:233.500px;width:64px;text-align:center;font-size:13px;line-height:16px;color:#217346;transform:scaleX(.88);-webkit-text-stroke:.2px">K</span>
<div class="a" style="left:833px;top:232px;width:1px;height:18px;background:#ababab;"></div>
<span class="a" style="left:833px;top:233.500px;width:64px;text-align:center;font-size:13px;line-height:16px;color:#217346;transform:scaleX(.88);-webkit-text-stroke:.2px">L</span>
<div class="a" style="left:32px;top:252px;width:21px;height:485px;background:#e6e6e6;"></div>
<div class="a" style="left:53px;top:252px;width:1px;height:485px;background:#b5b5b5;"></div>
<div class="a" style="left:54px;top:271px;width:834px;height:1px;background:#d4d4d4;"></div>
<div class="a" style="left:32px;top:271px;width:21px;height:1px;background:#b8b8b8;"></div>
<span class="a" style="left:26px;top:256.00px;width:30px;text-align:center;font-size:13px;line-height:13px;color:#1c1c1c;-webkit-text-stroke:0.150px;transform:scaleX(.89)">1</span>
<div class="a" style="left:54px;top:291px;width:834px;height:1px;background:#d4d4d4;"></div>
<div class="a" style="left:32px;top:291px;width:21px;height:1px;background:#b8b8b8;"></div>
<span class="a" style="left:26px;top:276.00px;width:30px;text-align:center;font-size:13px;line-height:13px;color:#1c1c1c;-webkit-text-stroke:0.150px;transform:scaleX(.89)">2</span>
<div class="a" style="left:54px;top:311px;width:834px;height:1px;background:#d4d4d4;"></div>
<div class="a" style="left:32px;top:311px;width:21px;height:1px;background:#b8b8b8;"></div>
<span class="a" style="left:26px;top:296.00px;width:30px;text-align:center;font-size:13px;line-height:13px;color:#1c1c1c;-webkit-text-stroke:0.150px;transform:scaleX(.89)">3</span>
<div class="a" style="left:54px;top:331px;width:834px;height:1px;background:#d4d4d4;"></div>
<div class="a" style="left:32px;top:331px;width:21px;height:1px;background:#b8b8b8;"></div>
<span class="a" style="left:26px;top:316.00px;width:30px;text-align:center;font-size:13px;line-height:13px;color:#1c1c1c;-webkit-text-stroke:0.150px;transform:scaleX(.89)">4</span>
<div class="a" style="left:54px;top:351px;width:834px;height:1px;background:#d4d4d4;"></div>
<div class="a" style="left:32px;top:351px;width:21px;height:1px;background:#b8b8b8;"></div>
<span class="a" style="left:26px;top:336.00px;width:30px;text-align:center;font-size:13px;line-height:13px;color:#1c1c1c;-webkit-text-stroke:0.150px;transform:scaleX(.89)">5</span>
<div class="a" style="left:54px;top:371px;width:834px;height:1px;background:#d4d4d4;"></div>
<div class="a" style="left:32px;top:371px;width:21px;height:1px;background:#b8b8b8;"></div>
<span class="a" style="left:26px;top:356.00px;width:30px;text-align:center;font-size:13px;line-height:13px;color:#1c1c1c;-webkit-text-stroke:0.150px;transform:scaleX(.89)">6</span>
<div class="a" style="left:54px;top:391px;width:834px;height:1px;background:#d4d4d4;"></div>
<div class="a" style="left:32px;top:391px;width:21px;height:1px;background:#b8b8b8;"></div>
<span class="a" style="left:26px;top:376.00px;width:30px;text-align:center;font-size:13px;line-height:13px;color:#1c1c1c;-webkit-text-stroke:0.150px;transform:scaleX(.89)">7</span>
<div class="a" style="left:54px;top:411px;width:834px;height:1px;background:#d4d4d4;"></div>
<div class="a" style="left:32px;top:411px;width:21px;height:1px;background:#b8b8b8;"></div>
<span class="a" style="left:26px;top:396.00px;width:30px;text-align:center;font-size:13px;line-height:13px;color:#1c1c1c;-webkit-text-stroke:0.150px;transform:scaleX(.89)">8</span>
<div class="a" style="left:54px;top:431px;width:834px;height:1px;background:#d4d4d4;"></div>
<div class="a" style="left:32px;top:431px;width:21px;height:1px;background:#b8b8b8;"></div>
<span class="a" style="left:26px;top:416.00px;width:30px;text-align:center;font-size:13px;line-height:13px;color:#1c1c1c;-webkit-text-stroke:0.150px;transform:scaleX(.89)">9</span>
<div class="a" style="left:54px;top:451px;width:834px;height:1px;background:#d4d4d4;"></div>
<div class="a" style="left:32px;top:451px;width:21px;height:1px;background:#b8b8b8;"></div>
<span class="a" style="left:26px;top:436.00px;width:30px;text-align:center;font-size:13px;line-height:13px;color:#1c1c1c;-webkit-text-stroke:0.150px;transform:scaleX(.89)">10</span>
<div class="a" style="left:54px;top:471px;width:834px;height:1px;background:#d4d4d4;"></div>
<div class="a" style="left:32px;top:471px;width:21px;height:1px;background:#b8b8b8;"></div>
<span class="a" style="left:26px;top:456.00px;width:30px;text-align:center;font-size:13px;line-height:13px;color:#1c1c1c;-webkit-text-stroke:0.150px;transform:scaleX(.89)">11</span>
<div class="a" style="left:54px;top:491px;width:834px;height:1px;background:#d4d4d4;"></div>
<div class="a" style="left:32px;top:491px;width:21px;height:1px;background:#b8b8b8;"></div>
<span class="a" style="left:26px;top:476.00px;width:30px;text-align:center;font-size:13px;line-height:13px;color:#1c1c1c;-webkit-text-stroke:0.150px;transform:scaleX(.89)">12</span>
<div class="a" style="left:54px;top:511px;width:834px;height:1px;background:#d4d4d4;"></div>
<div class="a" style="left:32px;top:511px;width:21px;height:1px;background:#b8b8b8;"></div>
<span class="a" style="left:26px;top:496.00px;width:30px;text-align:center;font-size:13px;line-height:13px;color:#1c1c1c;-webkit-text-stroke:0.150px;transform:scaleX(.89)">13</span>
<div class="a" style="left:54px;top:531px;width:834px;height:1px;background:#d4d4d4;"></div>
<div class="a" style="left:32px;top:531px;width:21px;height:1px;background:#b8b8b8;"></div>
<span class="a" style="left:26px;top:516.00px;width:30px;text-align:center;font-size:13px;line-height:13px;color:#1c1c1c;-webkit-text-stroke:0.150px;transform:scaleX(.89)">21</span>
<div class="a" style="left:54px;top:551px;width:834px;height:1px;background:#d4d4d4;"></div>
<div class="a" style="left:32px;top:551px;width:21px;height:1px;background:#b8b8b8;"></div>
<span class="a" style="left:26px;top:536.00px;width:30px;text-align:center;font-size:13px;line-height:13px;color:#1c1c1c;-webkit-text-stroke:0.150px;transform:scaleX(.89)">22</span>
<div class="a" style="left:54px;top:571px;width:834px;height:1px;background:#d4d4d4;"></div>
<div class="a" style="left:32px;top:571px;width:21px;height:1px;background:#b8b8b8;"></div>
<span class="a" style="left:26px;top:556.00px;width:30px;text-align:center;font-size:13px;line-height:13px;color:#1c1c1c;-webkit-text-stroke:0.150px;transform:scaleX(.89)">23</span>
<div class="a" style="left:54px;top:591px;width:834px;height:1px;background:#d4d4d4;"></div>
<div class="a" style="left:32px;top:591px;width:21px;height:1px;background:#b8b8b8;"></div>
<span class="a" style="left:26px;top:576.00px;width:30px;text-align:center;font-size:13px;line-height:13px;color:#1c1c1c;-webkit-text-stroke:0.150px;transform:scaleX(.89)">24</span>
<div class="a" style="left:54px;top:611px;width:834px;height:1px;background:#d4d4d4;"></div>
<div class="a" style="left:32px;top:611px;width:21px;height:1px;background:#b8b8b8;"></div>
<span class="a" style="left:26px;top:596.00px;width:30px;text-align:center;font-size:13px;line-height:13px;color:#1c1c1c;-webkit-text-stroke:0.150px;transform:scaleX(.89)">25</span>
<div class="a" style="left:54px;top:631px;width:834px;height:1px;background:#d4d4d4;"></div>
<div class="a" style="left:32px;top:631px;width:21px;height:1px;background:#b8b8b8;"></div>
<span class="a" style="left:26px;top:616.00px;width:30px;text-align:center;font-size:13px;line-height:13px;color:#1c1c1c;-webkit-text-stroke:0.150px;transform:scaleX(.89)">26</span>
<div class="a" style="left:54px;top:651px;width:834px;height:1px;background:#d4d4d4;"></div>
<div class="a" style="left:32px;top:651px;width:21px;height:1px;background:#b8b8b8;"></div>
<span class="a" style="left:26px;top:636.00px;width:30px;text-align:center;font-size:13px;line-height:13px;color:#1c1c1c;-webkit-text-stroke:0.150px;transform:scaleX(.89)">27</span>
<div class="a" style="left:54px;top:671px;width:834px;height:1px;background:#d4d4d4;"></div>
<div class="a" style="left:32px;top:671px;width:21px;height:1px;background:#b8b8b8;"></div>
<span class="a" style="left:26px;top:656.00px;width:30px;text-align:center;font-size:13px;line-height:13px;color:#1c1c1c;-webkit-text-stroke:0.150px;transform:scaleX(.89)">28</span>
<div class="a" style="left:54px;top:691px;width:834px;height:1px;background:#d4d4d4;"></div>
<div class="a" style="left:32px;top:691px;width:21px;height:1px;background:#b8b8b8;"></div>
<span class="a" style="left:26px;top:676.00px;width:30px;text-align:center;font-size:13px;line-height:13px;color:#1c1c1c;-webkit-text-stroke:0.150px;transform:scaleX(.89)">29</span>
<div class="a" style="left:54px;top:711px;width:834px;height:1px;background:#d4d4d4;"></div>
<div class="a" style="left:32px;top:711px;width:21px;height:1px;background:#b8b8b8;"></div>
<span class="a" style="left:26px;top:696.00px;width:30px;text-align:center;font-size:13px;line-height:13px;color:#1c1c1c;-webkit-text-stroke:0.150px;transform:scaleX(.89)">30</span>
<div class="a" style="left:54px;top:731px;width:834px;height:1px;background:#d4d4d4;"></div>
<div class="a" style="left:32px;top:731px;width:21px;height:1px;background:#b8b8b8;"></div>
<span class="a" style="left:26px;top:716.00px;width:30px;text-align:center;font-size:13px;line-height:13px;color:#1c1c1c;-webkit-text-stroke:0.150px;transform:scaleX(.89)">31</span>
<div class="a" style="left:148px;top:252px;width:1px;height:485px;background:#d4d4d4;"></div>
<div class="a" style="left:240px;top:252px;width:1px;height:485px;background:#d4d4d4;"></div>
<div class="a" style="left:321px;top:252px;width:1px;height:485px;background:#d4d4d4;"></div>
<div class="a" style="left:385px;top:252px;width:1px;height:485px;background:#d4d4d4;"></div>
<div class="a" style="left:449px;top:252px;width:1px;height:485px;background:#d4d4d4;"></div>
<div class="a" style="left:513px;top:252px;width:1px;height:485px;background:#d4d4d4;"></div>
<div class="a" style="left:577px;top:252px;width:1px;height:485px;background:#d4d4d4;"></div>
<div class="a" style="left:641px;top:252px;width:1px;height:485px;background:#d4d4d4;"></div>
<div class="a" style="left:705px;top:252px;width:1px;height:485px;background:#d4d4d4;"></div>
<div class="a" style="left:769px;top:252px;width:1px;height:485px;background:#d4d4d4;"></div>
<div class="a" style="left:833px;top:252px;width:1px;height:485px;background:#d4d4d4;"></div>
<div class="a" style="left:32px;top:509.5px;width:21px;height:1.5px;background:#fff;"></div>
<div class="a" style="left:53px;top:510.6px;width:835px;height:2px;background:#217346;"></div>
<div class="a" style="left:54px;top:271px;width:268px;height:1px;background:#000;"></div>
<div class="a" style="left:54px;top:291px;width:268px;height:1px;background:#000;"></div>
<div class="a" style="left:54px;top:311px;width:268px;height:1px;background:#000;"></div>
<div class="a" style="left:54px;top:331px;width:268px;height:1px;background:#000;"></div>
<div class="a" style="left:54px;top:351px;width:268px;height:1px;background:#000;"></div>
<div class="a" style="left:54px;top:371px;width:268px;height:1px;background:#000;"></div>
<div class="a" style="left:54px;top:391px;width:268px;height:1px;background:#000;"></div>
<div class="a" style="left:54px;top:411px;width:268px;height:1px;background:#000;"></div>
<div class="a" style="left:54px;top:431px;width:268px;height:1px;background:#000;"></div>
<div class="a" style="left:54px;top:451px;width:268px;height:1px;background:#000;"></div>
<div class="a" style="left:54px;top:471px;width:268px;height:1px;background:#000;"></div>
<div class="a" style="left:54px;top:491px;width:268px;height:1px;background:#000;"></div>
<div class="a" style="left:148px;top:252px;width:1px;height:258px;background:#000;"></div>
<div class="a" style="left:240px;top:252px;width:1px;height:258px;background:#000;"></div>
<div class="a" style="left:321px;top:252px;width:1px;height:258px;background:#000;"></div>
<span class="a t" id="T38" style="left:56.5px;transform:scaleX(1.0356);top:256.00px;font-size:13px;line-height:13px;color:#000;-webkit-text-stroke:0;">Месяц</span>
<span class="a t" id="T39" style="left:151.6px;transform:scaleX(1.0389);top:256.00px;font-size:13px;line-height:13px;color:#000;-webkit-text-stroke:0;">Продано</span>
<span class="a t" id="T40" style="left:243.7px;transform:scaleX(1.0312);top:256.00px;font-size:13px;line-height:13px;color:#000;-webkit-text-stroke:0;">Прибыль</span>
<span class="a t" id="T41" style="left:56.5px;transform:scaleX(0.9941);top:276.00px;font-size:13px;line-height:13px;color:#000;-webkit-text-stroke:0;">Январь</span>
<span class="a t" id="T42" style="left:224.66px;transform:scaleX(0.9151);top:276.00px;font-size:13px;line-height:13px;color:#000;-webkit-text-stroke:0;">14</span>
<span class="a t" id="T43" style="left:284.09999999999997px;transform:scaleX(0.9625);top:276.00px;font-size:13px;line-height:13px;color:#000;-webkit-text-stroke:0;">54234</span>
<span class="a t" id="T44" style="left:56.5px;transform:scaleX(1.0276);top:296.00px;font-size:13px;line-height:13px;color:#000;-webkit-text-stroke:0;">Февраль</span>
<span class="a t" id="T45" style="left:224.66px;transform:scaleX(0.9151);top:296.00px;font-size:13px;line-height:13px;color:#000;-webkit-text-stroke:0;">17</span>
<span class="a t" id="T46" style="left:284.09999999999997px;transform:scaleX(0.9625);top:296.00px;font-size:13px;line-height:13px;color:#000;-webkit-text-stroke:0;">76345</span>
<span class="a t" id="T47" style="left:56.5px;transform:scaleX(1.0286);top:316.00px;font-size:13px;line-height:13px;color:#000;-webkit-text-stroke:0;">Март</span>
<span class="a t" id="T48" style="left:224.66px;transform:scaleX(0.9151);top:316.00px;font-size:13px;line-height:13px;color:#000;-webkit-text-stroke:0;">26</span>
<span class="a t" id="T49" style="left:284.09999999999997px;transform:scaleX(0.9625);top:316.00px;font-size:13px;line-height:13px;color:#000;-webkit-text-stroke:0;">45234</span>
<span class="a t" id="T50" style="left:56.5px;transform:scaleX(1.0746);top:336.00px;font-size:13px;line-height:13px;color:#000;-webkit-text-stroke:0;">Апрель</span>
<span class="a t" id="T51" style="left:224.66px;transform:scaleX(0.9151);top:336.00px;font-size:13px;line-height:13px;color:#000;-webkit-text-stroke:0;">78</span>
<span class="a t" id="T52" style="left:277.14px;transform:scaleX(0.9624);top:336.00px;font-size:13px;line-height:13px;color:#000;-webkit-text-stroke:0;">178000</span>
<span class="a t" id="T53" style="left:56.5px;transform:scaleX(1.0209);top:356.00px;font-size:13px;line-height:13px;color:#000;-webkit-text-stroke:0;">Май</span>
<span class="a t" id="T54" style="left:231.28px;transform:scaleX(0.9151);top:356.00px;font-size:13px;line-height:13px;color:#000;-webkit-text-stroke:0;">3</span>
<span class="a t" id="T55" style="left:291.06px;transform:scaleX(0.9626);top:356.00px;font-size:13px;line-height:13px;color:#000;-webkit-text-stroke:0;">4523</span>
<span class="a t" id="T56" style="left:56.5px;transform:scaleX(1.0712);top:376.00px;font-size:13px;line-height:13px;color:#000;-webkit-text-stroke:0;">Июнь</span>
<span class="a t" id="T57" style="left:224.66px;transform:scaleX(0.9151);top:376.00px;font-size:13px;line-height:13px;color:#000;-webkit-text-stroke:0;">15</span>
<span class="a t" id="T58" style="left:284.09999999999997px;transform:scaleX(0.9625);top:376.00px;font-size:13px;line-height:13px;color:#000;-webkit-text-stroke:0;">53452</span>
<span class="a t" id="T59" style="left:56.5px;transform:scaleX(1.0672);top:396.00px;font-size:13px;line-height:13px;color:#000;-webkit-text-stroke:0;">Июль</span>
<span class="a t" id="T60" style="left:224.66px;transform:scaleX(0.9151);top:396.00px;font-size:13px;line-height:13px;color:#000;-webkit-text-stroke:0;">43</span>
<span class="a t" id="T61" style="left:284.09999999999997px;transform:scaleX(0.9625);top:396.00px;font-size:13px;line-height:13px;color:#000;-webkit-text-stroke:0;">78000</span>
<span class="a t" id="T62" style="left:56.5px;transform:scaleX(0.9939);top:416.00px;font-size:13px;line-height:13px;color:#000;-webkit-text-stroke:0;">Август</span>
<span class="a t" id="T63" style="left:224.66px;transform:scaleX(0.9151);top:416.00px;font-size:13px;line-height:13px;color:#000;-webkit-text-stroke:0;">27</span>
<span class="a t" id="T64" style="left:284.09999999999997px;transform:scaleX(0.9625);top:416.00px;font-size:13px;line-height:13px;color:#000;-webkit-text-stroke:0;">45234</span>
<span class="a t" id="T65" style="left:56.5px;transform:scaleX(1.0197);top:436.00px;font-size:13px;line-height:13px;color:#000;-webkit-text-stroke:0;">Сентябрь</span>
<span class="a t" id="T66" style="left:224.66px;transform:scaleX(0.9151);top:436.00px;font-size:13px;line-height:13px;color:#000;-webkit-text-stroke:0;">28</span>
<span class="a t" id="T67" style="left:284.09999999999997px;transform:scaleX(0.9625);top:436.00px;font-size:13px;line-height:13px;color:#000;-webkit-text-stroke:0;">97643</span>
<span class="a t" id="T68" style="left:56.5px;transform:scaleX(1.0438);top:456.00px;font-size:13px;line-height:13px;color:#000;-webkit-text-stroke:0;">Октябрь</span>
<span class="a t" id="T69" style="left:224.66px;transform:scaleX(0.9151);top:456.00px;font-size:13px;line-height:13px;color:#000;-webkit-text-stroke:0;">31</span>
<span class="a t" id="T70" style="left:291.06px;transform:scaleX(0.9626);top:456.00px;font-size:13px;line-height:13px;color:#000;-webkit-text-stroke:0;">4524</span>
<span class="a t" id="T71" style="left:56.5px;transform:scaleX(1.0197);top:476.00px;font-size:13px;line-height:13px;color:#000;-webkit-text-stroke:0;">Ноябрь</span>
<span class="a t" id="T72" style="left:224.66px;transform:scaleX(0.9151);top:476.00px;font-size:13px;line-height:13px;color:#000;-webkit-text-stroke:0;">78</span>
<span class="a t" id="T73" style="left:277.14px;transform:scaleX(0.9624);top:476.00px;font-size:13px;line-height:13px;color:#000;-webkit-text-stroke:0;">245908</span>
<span class="a t" id="T74" style="left:56.5px;transform:scaleX(1.0713);top:496.00px;font-size:13px;line-height:13px;color:#000;-webkit-text-stroke:0;">Декабрь</span>
<span class="a t" id="T75" style="left:218.04000000000002px;transform:scaleX(0.9151);top:496.00px;font-size:13px;line-height:13px;color:#000;-webkit-text-stroke:0;">134</span>
<span class="a t" id="T76" style="left:277.14px;transform:scaleX(0.9624);top:496.00px;font-size:13px;line-height:13px;color:#000;-webkit-text-stroke:0;">234524</span>
<div class="a" style="left:888px;top:252px;width:1px;height:485px;background:#a0a0a0;"></div>
<div class="a" style="left:32px;top:736px;width:857px;height:1px;background:#a0a0a0;"></div>
<div class="a" style="left:889px;top:232px;width:21px;height:505px;background:#e6e6e6;"></div>
<div class="a" style="left:892px;top:249px;width:15px;height:473px;background:#d9d9d9;"></div>
<div class="a" style="left:892px;top:234px;width:15px;height:15px;background:#fff;border:1px solid #ababab;box-sizing:border-box;"></div>
<svg class="a" style="left:895.5px;top:237.8px;" width="8" height="5" viewBox="0 0 8 5"><path d="M0 4.500L4 0.500 8 4.500z" fill="#777"/></svg>
<div class="a" style="left:892px;top:249px;width:15px;height:457px;background:#fff;border:1px solid #ababab;box-sizing:border-box;"></div>
<div class="a" style="left:892px;top:722px;width:15px;height:15px;background:#fff;border:1px solid #ababab;box-sizing:border-box;"></div>
<svg class="a" style="left:895.5px;top:727.5px;" width="8" height="5" viewBox="0 0 8 5"><path d="M0 0.500h8L4 4.500z" fill="#777"/></svg>
<div class="a" style="left:32px;top:737px;width:878px;height:27px;background:#e6e6e6;"></div>
<svg class="a" style="left:54px;top:744px;" width="6" height="10" viewBox="0 0 6 10"><path d="M5 0.500v9L0.500 5z" fill="#c4c4c4"/></svg>
<svg class="a" style="left:83.4px;top:744px;" width="6" height="10" viewBox="0 0 6 10"><path d="M1 0.500v9L5.500 5z" fill="#c4c4c4"/></svg>
<div class="a" style="left:128px;top:736px;width:60px;height:25px;background:#fff;"></div>
<div class="a" style="left:128px;top:737px;width:1px;height:22px;background:#c6c6c6;"></div>
<div class="a" style="left:187px;top:737px;width:1px;height:22px;background:#c6c6c6;"></div>
<div class="a" style="left:128px;top:759px;width:60px;height:2px;background:#217346;"></div>
<span class="a t" id="T77" style="left:140px;transform:scaleX(0.9222);top:743.00px;font-size:13px;line-height:13px;color:#217346;font-weight:700;">Лист1</span>
<svg class="a" style="left:220px;top:741px;" width="18" height="18" viewBox="0 0 18 18"><circle cx="9" cy="9" r="7.800" fill="none" stroke="#777" stroke-width="1.100"/><path d="M9 5v8M5 9h8" stroke="#666" stroke-width="1.500"/></svg>
<div class="a" style="left:557.3px;top:745px;width:2px;height:2px;background:#a8a8a8;"></div>
<div class="a" style="left:557.3px;top:749px;width:2px;height:2px;background:#a8a8a8;"></div>
<div class="a" style="left:557.3px;top:753px;width:2px;height:2px;background:#a8a8a8;"></div>
<div class="a" style="left:575px;top:743px;width:314px;height:15px;background:#d9d9d9;"></div>
<div class="a" style="left:575px;top:743px;width:15px;height:15px;background:#fff;border:1px solid #ababab;box-sizing:border-box;"></div>
<svg class="a" style="left:579.5px;top:746.5px;" width="5" height="8" viewBox="0 0 5 8"><path d="M4.500 0v8L0.500 4z" fill="#6a6a6a"/></svg>
<div class="a" style="left:590px;top:743px;width:258px;height:15px;background:#fff;border:1px solid #ababab;box-sizing:border-box;"></div>
<div class="a" style="left:874px;top:743px;width:15px;height:15px;background:#fff;border:1px solid #ababab;box-sizing:border-box;"></div>
<svg class="a" style="left:879.5px;top:746.5px;" width="5" height="8" viewBox="0 0 5 8"><path d="M0.500 0v8L4.500 4z" fill="#777"/></svg>
<div class="a" style="left:32px;top:764px;width:878px;height:1px;background:#c8c8c8;"></div>
<div class="a" style="left:32px;top:765px;width:878px;height:20px;background:#f3f3f3;"></div>
<div class="a" style="left:596px;top:765px;width:40px;height:20px;background:#c6c6c6;"></div>
<svg class="a" style="left:609px;top:768px;" width="14" height="14" viewBox="0 0 14 14"><rect x="0.500" y="0.500" width="12" height="12" fill="none" stroke="#555"/><path d="M0.500 4.500h12M0.500 8.500h12M4.500 0.500v12M8.500 0.500v12" stroke="#555"/></svg>
<svg class="a" style="left:649px;top:768px;" width="14" height="14" viewBox="0 0 14 14"><rect x="0.500" y="0.500" width="12" height="12" fill="none" stroke="#555"/><rect x="3.500" y="3.500" width="6" height="6" fill="none" stroke="#555"/><path d="M5 5.500h3M5 7.500h3" stroke="#555" stroke-width=".8"/></svg>
<svg class="a" style="left:689px;top:768px;" width="14" height="14" viewBox="0 0 14 14"><rect x="0.500" y="0.500" width="12" height="12" fill="none" stroke="#555"/><path d="M4.500 0.500v6M8.500 0.500v6M4.500 6.500h4" stroke="#555" fill="none"/></svg>
<div class="a" style="left:722px;top:774px;width:7.5px;height:1px;background:#444;"></div>
<div class="a" style="left:735px;top:774px;width:100px;height:1px;background:#a6a6a6;"></div>
<div class="a" style="left:782.7px;top:770px;width:5px;height:11px;background:#666;"></div>
<svg class="a" style="left:840px;top:771px;" width="8" height="8" viewBox="0 0 8 8"><path d="M3.500 0v7M0 3.500h7" stroke="#444" stroke-width="1"/></svg>
<span class="a t" id="T78" style="left:861.8px;transform:scaleX(0.8954);top:769.87px;font-size:11.5px;line-height:11.5px;color:#333;">100 %</span>
<div class="a" style="left:702px;top:185px;width:164.5px;height:72px;background:#fff;border:1px solid #c6c6c6;box-sizing:border-box;box-shadow:0 1px 4px rgba(0,0,0,.35);"></div>
<div class="a" style="left:811px;top:186px;width:48px;height:70.5px;background:#c6c6c6;"></div>
<svg class="a" style="left:721.5px;top:190.5px;" width="28" height="28" viewBox="0 0 28 28">
<g fill="#fff" stroke="#777" stroke-width="1">
<rect x="0.500" y="0.500" width="7.500" height="5"/><rect x="8" y="0.500" width="7.500" height="5"/>
<rect x="0.500" y="16.500" width="7.500" height="5.250"/><rect x="8" y="16.500" width="7.500" height="5.250"/>
<rect x="0.500" y="21.750" width="7.500" height="5.250"/><rect x="8" y="21.750" width="7.500" height="5.250"/></g>
<rect x="11.500" y="8.500" width="7.300" height="5.300" fill="#bcd4ee" stroke="#777"/><rect x="18.800" y="8.500" width="7.300" height="5.300" fill="#bcd4ee" stroke="#777"/>
<path d="M8.600 11.200H2M4.900 8.200l-3 3 3 3" fill="none" stroke="#3a73b5" stroke-width="1.800"/></svg>
<span class="a t" id="T79" style="left:711.4px;transform:scaleX(0.9356);top:225.84px;font-size:12px;line-height:12px;color:#262626;">Вставить</span>
<svg class="a" style="left:732.2px;top:245.1px" width="7" height="4.9"><path d="M1 1h5l-2.5 2.9z" fill="#666"/></svg>
<svg class="a" style="left:771.5px;top:190.5px;" width="31" height="28" viewBox="0 0 31 28">
<g fill="#fff" stroke="#777" stroke-width="1">
<rect x="0.500" y="0.500" width="7.500" height="5"/><rect x="8" y="0.500" width="7.500" height="5"/>
<rect x="0.500" y="16.500" width="7.500" height="5.250"/><rect x="8" y="16.500" width="7.500" height="5.250"/>
<rect x="0.500" y="21.750" width="7.500" height="5.250"/><rect x="8" y="21.750" width="7.500" height="5.250"/></g>
<rect x="6.500" y="8.500" width="8" height="5.300" fill="#bcd4ee" stroke="#777"/>
<path d="M14.500 8l3.300 3.200-3.300 3.200z" fill="#3a73b5"/>
<path d="M16.300 5.500l12.300 12.500M28.800 6L15.800 17" fill="none" stroke="#d9532c" stroke-width="2"/></svg>
<span class="a t" id="T80" style="left:764px;transform:scaleX(0.9536);top:225.84px;font-size:12px;line-height:12px;color:#262626;">Удалить</span>
<svg class="a" style="left:783.0px;top:245.1px" width="7" height="4.9"><path d="M1 1h5l-2.5 2.9z" fill="#666"/></svg>
<svg class="a" style="left:820px;top:189px;" width="31" height="33" viewBox="0 0 31 33">
<path d="M1 0.500v5M29 0.500v5M1.500 3h27M5 0.800L2 3l3 2.200M25 0.800L28 3l-3 2.200" fill="none" stroke="#3a73b5" stroke-width="1"/>
<rect x="1.500" y="7.500" width="27.500" height="20" fill="#fff" stroke="#777"/>
<path d="M1.500 12.500h27.500M1.500 22h27.500M9 7.500v20M17 7.500v20M23 7.500v20" stroke="#9a9a9a" stroke-width="1"/>
<rect x="9.500" y="13" width="7" height="8.500" fill="#3a73b5"/>
<path d="M1.500 27.500v4h6l2-2.500h3M15 29l2 2.500h10.500l1.500-2v-2" fill="none" stroke="#777" stroke-width="1"/></svg>
<span class="a t" id="T81" style="left:813px;transform:scaleX(1.0061);top:225.84px;font-size:12px;line-height:12px;color:#262626;">Формат</span>
<svg class="a" style="left:831.2px;top:245.1px" width="7" height="4.9"><path d="M1 1h5l-2.5 2.9z" fill="#555"/></svg>
<div class="a" style="left:641px;top:255px;width:265px;height:390px;background:#fff;border:1px solid #c6c6c6;box-sizing:border-box;box-shadow:0 2px 5px rgba(0,0,0,.24);"></div>
<div class="a" style="left:643px;top:257px;width:261px;height:23px;background:#eaeaea;"></div>
<span class="a t" id="T82" style="left:651.7px;transform:scaleX(1.0028);top:262.14px;font-size:12px;line-height:12px;color:#5a5a5a;font-weight:700;-webkit-text-stroke:0;">Размер ячейки</span>
<span class="a t" id="T83" style="left:674.7px;transform:scaleX(0.9829);top:287.74px;font-size:12px;line-height:12px;color:#444;">В<u>ы</u>сота строки...</span>
<span class="a t" id="T84" style="left:674.7px;transform:scaleX(1.0090);top:311.74px;font-size:12px;line-height:12px;color:#444;"><u>А</u>втоподбор высоты строки</span>
<div class="a" style="left:675px;top:330.5px;width:228px;height:1px;background:#e1e1e1;"></div>
<span class="a t" id="T85" style="left:674.7px;transform:scaleX(0.9891);top:337.74px;font-size:12px;line-height:12px;color:#444;">Ш<u>и</u>рина столбца...</span>
<span class="a t" id="T86" style="left:674.7px;transform:scaleX(1.0165);top:361.74px;font-size:12px;line-height:12px;color:#444;">Автопод<u>б</u>ор ширины столбца</span>
<span class="a t" id="T87" style="left:674.7px;transform:scaleX(1.0222);top:385.74px;font-size:12px;line-height:12px;color:#444;">Ширина по умолчани<u>ю</u>...</span>
<div class="a" style="left:643px;top:404px;width:261px;height:24px;background:#eaeaea;"></div>
<span class="a t" id="T88" style="left:651.7px;transform:scaleX(0.9617);top:409.64px;font-size:12px;line-height:12px;color:#5a5a5a;font-weight:700;-webkit-text-stroke:0;">Видимость</span>
<div class="a" style="left:643px;top:428px;width:261px;height:24px;background:#c6c6c6;"></div>
<span class="a t" id="T89" style="left:674.7px;transform:scaleX(0.9943);top:433.24px;font-size:12px;line-height:12px;color:#262626;">Скрыт<u>ь</u> или отобразить</span>
<svg class="a" style="left:890.5px;top:434px;" width="5" height="9" viewBox="0 0 5 9"><path d="M0.500 0.500v8L4.700 4.500z" fill="#444"/></svg>
<div class="a" style="left:643px;top:452px;width:261px;height:22px;background:#eaeaea;"></div>
<span class="a t" id="T90" style="left:651.7px;transform:scaleX(0.9594);top:456.64px;font-size:12px;line-height:12px;color:#5a5a5a;font-weight:700;-webkit-text-stroke:0;">Упорядочить листы</span>
<span class="a t" id="T91" style="left:674.7px;transform:scaleX(0.9853);top:480.24px;font-size:12px;line-height:12px;color:#444;"><u>П</u>ереименовать лист</span>
<svg class="a" style="left:651.5px;top:483px;" width="7" height="7" viewBox="0 0 7 7"><circle cx="3.500" cy="3.500" r="2.600" fill="#f5921e"/></svg>
<span class="a t" id="T92" style="left:674.7px;transform:scaleX(0.9950);top:503.74px;font-size:12px;line-height:12px;color:#444;">Пере<u>м</u>естить или скопировать лист...</span>
<span class="a t" id="T93" style="left:674.7px;transform:scaleX(0.9964);top:527.74px;font-size:12px;line-height:12px;color:#444;"><u>Ц</u>вет ярлычка</span>
<svg class="a" style="left:890.5px;top:529.5px;" width="5" height="9" viewBox="0 0 5 9"><path d="M0.500 0.500v8L4.500 4.500z" fill="#555"/></svg>
<div class="a" style="left:643px;top:546px;width:261px;height:23px;background:#eaeaea;"></div>
<span class="a t" id="T94" style="left:651.7px;transform:scaleX(0.9559);top:551.14px;font-size:12px;line-height:12px;color:#5a5a5a;font-weight:700;-webkit-text-stroke:0;">Защита</span>
<span class="a t" id="T95" style="left:674.7px;transform:scaleX(0.9905);top:574.74px;font-size:12px;line-height:12px;color:#444;">Защитить <u>л</u>ист...</span>
<span class="a t" id="T96" style="left:674.7px;transform:scaleX(0.9972);top:598.74px;font-size:12px;line-height:12px;color:#444;"><u>Б</u>локировать ячейку</span>
<div class="a" style="left:675px;top:617.5px;width:228px;height:1px;background:#e1e1e1;"></div>
<span class="a t" id="T97" style="left:674.7px;transform:scaleX(0.9825);top:624.74px;font-size:12px;line-height:12px;color:#444;">Формат <u>я</u>чеек...</span>
<svg class="a" style="left:646px;top:285px;" width="18" height="18" viewBox="0 0 18 18">
<path d="M3.500 1.600V7.600M1 4.100L3.500 1.400 6 4.100M3.500 10.300V16.400M1 13.900L3.500 16.600 6 13.900" fill="none" stroke="#3a73b5" stroke-width="1.400"/>
<path d="M16 2.900H8.800V15.100H16" fill="none" stroke="#666" stroke-width="1.200"/></svg>
<svg class="a" style="left:646px;top:335px;" width="20" height="18" viewBox="0 0 20 18">
<path d="M2.500 9.700V2.900H15.100V9.700" fill="none" stroke="#666" stroke-width="1.200"/>
<path d="M7.800 13.600H1.600M4.200 10.900L1.400 13.600 4.200 16.300M10.200 13.600H16.500M13.900 10.900L16.700 13.600 13.900 16.300" fill="none" stroke="#3a73b5" stroke-width="1.400"/></svg>
<svg class="a" style="left:647px;top:573px;" width="19" height="18" viewBox="0 0 19 18">
<rect x="0.500" y="0.500" width="14" height="13.500" fill="#fff" stroke="#777"/>
<path d="M0.500 4h14M0.500 7.500h14M0.500 11h14M4 0.500v13.500M8 0.500v13.500M11.500 0.500v13.500" stroke="#999" stroke-width=".8"/>
<rect x="9.500" y="10" width="8" height="7" fill="#eec274"/>
<path d="M11.200 10V8.200a2.300 2.300 0 0 1 4.600 0V10" fill="none" stroke="#eec274" stroke-width="1.300"/>
<rect x="13" y="12.500" width="1.200" height="2.500" fill="#fff"/>
<path d="M0.500 14v2.500h7" fill="none" stroke="#777" stroke-width=".9"/></svg>
<div class="a" style="left:645px;top:595px;width:20px;height:20px;background:#c6c6c6;border:1px solid #a6a6a6;box-sizing:border-box;"></div>
<svg class="a" style="left:648px;top:597.3px;" width="14" height="15" viewBox="0 0 14 15">
<rect x="1.500" y="6.500" width="11" height="8" fill="#eec274"/>
<path d="M3.800 6.500V4.500a3.200 3.200 0 0 1 6.400 0v2" fill="none" stroke="#eec274" stroke-width="1.600"/>
<rect x="6.400" y="9" width="1.300" height="3.300" fill="#d7a54a"/></svg>
<svg class="a" style="left:647px;top:622px;" width="17" height="19" viewBox="0 0 17 19">
<rect x="1.500" y="1.500" width="13" height="15" fill="#fff" stroke="#555"/>
<rect x="1" y="1" width="14" height="3" fill="#3a73b5"/>
<circle cx="5.500" cy="8" r="1.200" fill="#888" stroke="#444" stroke-width=".8"/><circle cx="5.500" cy="12.500" r="1.200" fill="#fff" stroke="#444" stroke-width=".8"/>
<path d="M8.300 8h4M8.300 12.500h4" stroke="#444" stroke-width="1"/></svg>
<div class="a" style="left:479px;top:427.5px;width:163.5px;height:148px;background:#fff;border:1px solid #c6c6c6;box-sizing:border-box;box-shadow:0 2px 5px rgba(0,0,0,.24);"></div>
<span class="a t" id="T98" style="left:513.2px;transform:scaleX(1.0087);top:434.74px;font-size:12px;line-height:12px;color:#444;">Скрыть строк<u>и</u></span>
<span class="a t" id="T99" style="left:513.2px;transform:scaleX(0.9983);top:458.74px;font-size:12px;line-height:12px;color:#444;"><u>С</u>крыть столбцы</span>
<span class="a t" id="T100" style="left:513.2px;transform:scaleX(0.9897);top:482.74px;font-size:12px;line-height:12px;color:#444;">Скрыть лис<u>т</u></span>
<div class="a" style="left:513px;top:500.5px;width:127px;height:1px;background:#e1e1e1;"></div>
<span class="a t" id="T101" style="left:513.2px;transform:scaleX(0.9880);top:508.54px;font-size:12px;line-height:12px;color:#444;"><u>О</u>тобразить строки</span>
<span class="a t" id="T102" style="left:513.2px;transform:scaleX(0.9880);top:532.74px;font-size:12px;line-height:12px;color:#444;">По<u>к</u>азать столбцы</span>
<span class="a t" id="T103" style="left:513.2px;transform:scaleX(0.9770);top:556.94px;font-size:12px;line-height:12px;color:#b0b0b0;">Отобра<u>з</u>ить лист...</span>
<div class="a" style="left:643.5px;top:423.5px;width:264.5px;height:32.5px;border:4px solid #fb0007;box-sizing:border-box;border-radius:9.5px;filter:drop-shadow(0.500px 2.500px 2.200px rgba(0,0,0,.62));"></div>
<div class="a" style="left:492.5px;top:500px;width:142.5px;height:29.5px;border:4px solid #fb0007;box-sizing:border-box;border-radius:9.5px;filter:drop-shadow(0.500px 2.500px 2.200px rgba(0,0,0,.62));"></div>
<svg class="a" style="left:602.4px;top:385.8px;" width="60" height="60" viewBox="0 0 60 60">
<defs>
<radialGradient id="g1" cx="28%" cy="22%" r="100%"><stop offset="0" stop-color="#ff9f6e"/><stop offset=".5" stop-color="#ff6e3e"/><stop offset=".9" stop-color="#fd4b17"/><stop offset="1" stop-color="#f4430f"/></radialGradient>
<filter id="f1" x="-30%" y="-30%" width="160%" height="170%"><feGaussianBlur stdDeviation="1.600"/></filter>
</defs>
<circle cx="30.8" cy="32" r="22.5" fill="#000" opacity=".45" filter="url(#f1)"/>
<circle cx="30" cy="30" r="23" fill="url(#g1)"/>
<circle cx="30" cy="30" r="22.5" fill="none" stroke="#d8380c" stroke-opacity=".8" stroke-width="1"/>
<filter id="ol1" x="-40%" y="-40%" width="180%" height="180%"><feGaussianBlur in="SourceAlpha" stdDeviation="1.400" result="b"/><feComponentTransfer in="b" result="o"><feFuncA type="linear" slope="10" intercept="-0.500"/></feComponentTransfer><feFlood flood-color="#1c1c1c"/><feComposite in2="o" operator="in" result="d"/><feMerge><feMergeNode in="d"/><feMergeNode in="SourceGraphic"/></feMerge></filter><clipPath id="cw1"><path d="M0 0H60V34.00H33.91V60H28.19V34.00H0z"/></clipPath><g filter="url(#ol1)"><g clip-path="url(#cw1)"><text x="31.05" y="38.20" text-anchor="middle" font-family="Liberation Sans, sans-serif" stroke-linejoin="round" fill="#fff" stroke="#fff" font-size="24.8" stroke-width="3.400">1</text></g></g></svg>
<svg class="a" style="left:455.3px;top:511.2px;" width="60.6" height="60.6" viewBox="0 0 60.6 60.6">
<defs>
<radialGradient id="g2" cx="28%" cy="22%" r="100%"><stop offset="0" stop-color="#ff9f6e"/><stop offset=".5" stop-color="#ff6e3e"/><stop offset=".9" stop-color="#fd4b17"/><stop offset="1" stop-color="#f4430f"/></radialGradient>
<filter id="f2" x="-30%" y="-30%" width="160%" height="170%"><feGaussianBlur stdDeviation="1.600"/></filter>
</defs>
<circle cx="31.1" cy="32.3" r="22.8" fill="#000" opacity=".45" filter="url(#f2)"/>
<circle cx="30.3" cy="30.3" r="23.3" fill="url(#g2)"/>
<circle cx="30.3" cy="30.3" r="22.8" fill="none" stroke="#d8380c" stroke-opacity=".8" stroke-width="1"/>
<filter id="ol2" x="-40%" y="-40%" width="180%" height="180%"><feGaussianBlur in="SourceAlpha" stdDeviation="1.400" result="b"/><feComponentTransfer in="b" result="o"><feFuncA type="linear" slope="10" intercept="-0.500"/></feComponentTransfer><feFlood flood-color="#1c1c1c"/><feComposite in2="o" operator="in" result="d"/><feMerge><feMergeNode in="d"/><feMergeNode in="SourceGraphic"/></feMerge></filter><g filter="url(#ol2)"><text x="29.80" y="39.35" text-anchor="middle" font-family="Liberation Sans, sans-serif" stroke-linejoin="round" fill="#fff" stroke="#fff" font-weight="700" font-size="26.8" stroke-width="1.300">2</text></g></svg>
</body></html>
